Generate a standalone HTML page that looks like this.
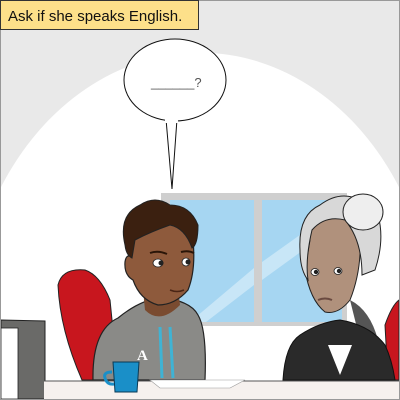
<!DOCTYPE html>
<html><head><style>
html,body{margin:0;padding:0;background:#fff;width:400px;height:400px;overflow:hidden}
svg{display:block}
</style></head><body>
<svg width="400" height="400" viewBox="0 0 400 400" xmlns="http://www.w3.org/2000/svg">
<rect x="0" y="0" width="400" height="400" fill="#e9e9e9"/>
<path d="M0,189 A235,287 0 0 1 400,189 L400,400 L0,400Z" fill="#ffffff"/>
<rect x="161" y="193" width="186" height="133" fill="#cfcfcf"/>
<rect x="170" y="200" width="84" height="122" fill="#a6d6f2"/>
<rect x="262" y="200" width="80" height="122" fill="#a6d6f2"/>
<polygon points="190,322 254,268 254,285 206,322" fill="#c8e6f7"/>
<polygon points="262,262 342,205 342,222 262,280" fill="#c8e6f7"/>
<path d="M58,285 Q62,268 85,270 Q100,275 110,300 L118,380 L82,380 Q60,330 58,285Z" fill="#c8161e" stroke="#222" stroke-width="1"/>
<path d="M385,325 Q392,305 399,300 L399,380 L388,380Z" fill="#c8161e" stroke="#222" stroke-width="1"/>
<path d="M350,300 Q370,310 378,340 L360,340Z" fill="#555"/>
<path d="M93,380 Q92,330 118,318 Q140,300 160,298 Q190,300 198,315 Q207,330 205,380Z" fill="#8a8a87" stroke="#222" stroke-width="1.2"/>
<path d="M160,327 L162,378 M170,327 L173,378" stroke="#3fb3d4" stroke-width="3" fill="none"/>
<text x="137" y="360" font-family="Liberation Serif,serif" font-weight="bold" font-size="15" fill="#fff">A</text>
<path d="M143,290 L145,310 Q160,325 180,305 L178,288Z" fill="#7a4b30"/>
<path d="M127,250 Q124,220 150,212 Q185,210 193,240 Q196,270 188,290 Q175,305 158,305 Q140,300 133,280 Q124,275 125,262 Q126,255 130,256Z" fill="#8e5a3c" stroke="#222" stroke-width="1.2"/>
<path d="M125,245 Q118,215 140,205 Q155,195 170,205 Q190,205 198,225 Q198,245 192,248 Q185,228 170,225 Q150,232 135,240 L132,258 Q126,255 125,245Z" fill="#3b2010" stroke="#222" stroke-width="1"/>
<ellipse cx="158" cy="263" rx="5" ry="4" fill="#fff" stroke="#222" stroke-width="0.8"/>
<circle cx="161" cy="263" r="2.5" fill="#222"/>
<ellipse cx="186" cy="262" rx="4" ry="4" fill="#fff" stroke="#222" stroke-width="0.8"/>
<circle cx="188" cy="262" r="2.5" fill="#222"/>
<path d="M150,253 Q158,250 167,254 M181,252 Q188,250 194,253" stroke="#2a1508" stroke-width="2" fill="none"/>
<path d="M170,290 Q177,293 184,290" stroke="#4a2515" stroke-width="1.5" fill="none"/>
<path d="M283,380 Q285,345 300,335 Q320,322 340,320 Q370,325 385,345 Q392,360 395,380Z" fill="#2a2a2a" stroke="#111" stroke-width="1"/>
<polygon points="328,345 352,345 340,375" fill="#fff"/>
<path d="M310,240 Q308,210 330,205 Q355,205 360,235 Q362,270 350,300 Q338,315 325,312 Q310,300 305,270Z" fill="#b0917c" stroke="#222" stroke-width="1"/>
<path d="M300,250 Q298,215 320,205 Q340,190 360,200 Q375,195 378,215 Q385,240 375,270 L362,275 Q362,240 345,220 Q325,215 312,230 Q305,260 308,280 Q300,270 300,250Z" fill="#d8d8d8" stroke="#222" stroke-width="1"/>
<ellipse cx="363" cy="212" rx="20" ry="18" fill="#eeeeee" stroke="#222" stroke-width="1"/>
<ellipse cx="315" cy="272" rx="4" ry="3.5" fill="#fff" stroke="#222" stroke-width="0.8"/>
<circle cx="316" cy="272" r="2.2" fill="#222"/>
<ellipse cx="338" cy="271" rx="4" ry="3.5" fill="#fff" stroke="#222" stroke-width="0.8"/>
<circle cx="339" cy="271" r="2.2" fill="#222"/>
<path d="M318,300 Q325,297 332,300" stroke="#6a4a40" stroke-width="2" fill="none"/>
<path d="M1,320 L45,321 L45,399 L1,399Z" fill="#6a6a68" stroke="#222" stroke-width="1"/>
<rect x="1" y="328" width="17" height="71" fill="#fff" stroke="#222" stroke-width="0.8"/>
<rect x="44" y="381" width="355" height="18" fill="#f6f1ee"/>
<line x1="44" y1="381" x2="399" y2="381" stroke="#555" stroke-width="1"/>
<polygon points="150,380 245,380 230,388 160,388" fill="#fff" stroke="#999" stroke-width="0.6"/>
<path d="M112,372 Q103,372 105,378 Q107,385 114,384" fill="none" stroke="#1a8fc8" stroke-width="3"/>
<path d="M113,362 L139,362 L137,392 L115,392Z" fill="#1a8fc8" stroke="#0a3a55" stroke-width="1"/>
<rect x="0.5" y="0.5" width="399" height="399" fill="none" stroke="#999" stroke-width="1"/>
<path d="M166,119 L172,189 L177,119Z" fill="#fff" stroke="#111" stroke-width="1"/>
<ellipse cx="175" cy="80" rx="51" ry="41" fill="#fff" stroke="#111" stroke-width="1"/>
<rect x="165" y="115" width="13" height="8" fill="#fff"/>
<text x="151" y="87" font-family="Liberation Sans,sans-serif" font-size="13" fill="#555">______?</text>
<rect x="0.5" y="0.5" width="198" height="29" fill="#fde08a" stroke="#333" stroke-width="1"/>
<text x="8" y="21" font-family="Liberation Sans,sans-serif" font-size="15" fill="#111">Ask if she speaks English.</text>
</svg>
</body></html>
